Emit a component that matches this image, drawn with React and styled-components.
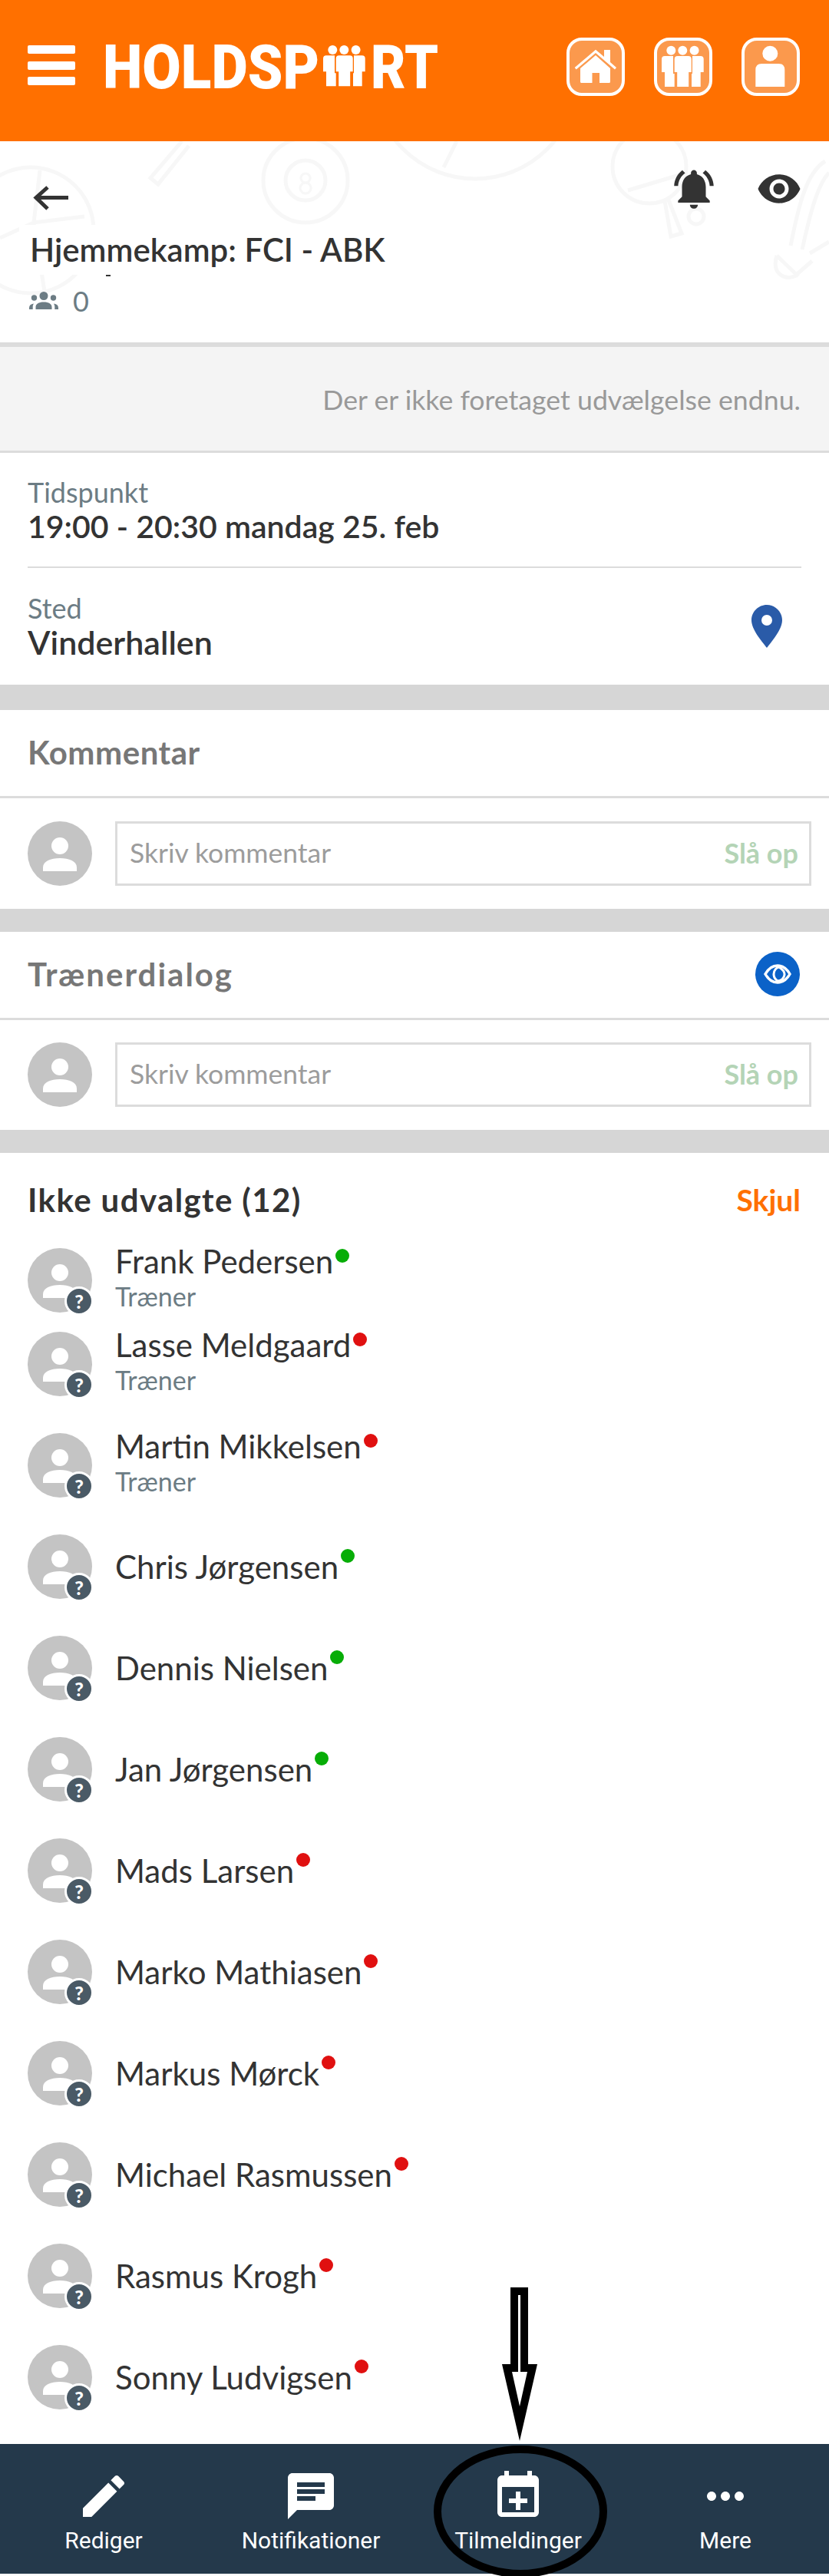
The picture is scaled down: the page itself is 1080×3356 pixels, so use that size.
import React from "react";
import styled, { createGlobalStyle } from "styled-components";

const Global = createGlobalStyle`
  html, body { margin: 0; padding: 0; background: #fff; }
  * { box-sizing: border-box; }
`;

const Page = styled.div`
  position: relative;
  width: 1080px;
  height: 3356px;
  overflow: hidden;
  background: #fff;
  font-family: "Lato", "Liberation Sans", sans-serif;
  color: #333;
`;

/* ---------- top header ---------- */
const Header = styled.header`
  height: 184px;
  background: #ff7000;
  display: flex;
  align-items: flex-start;
  padding: 49px 38px 0 36px;
`;
const Burger = styled.div`
  width: 62px;
  height: 52px;
  margin-top: 10px;
  display: flex;
  flex-direction: column;
  justify-content: space-between;
  span {
    display: block;
    height: 11px;
    background: #fff;
    border-radius: 2px;
  }
`;
const LogoSvg = styled.svg`
  display: block;
  margin: 0 0 0 40px;
  overflow: visible;
`;
const HeaderIcons = styled.nav`
  margin-left: auto;
  display: flex;
  gap: 38px;
`;
const HeaderButton = styled.div`
  width: 76px;
  height: 76px;
  border: 4px solid #fff;
  border-radius: 20px;
  background: #fb994d;
  position: relative;
  svg {
    display: block;
    position: absolute;
    left: -4px;
    top: -4px;
  }
`;

/* ---------- event summary ---------- */
const Summary = styled.section`
  position: relative;
  height: 262px;
  overflow: hidden;
  padding: 31px 35px 0 25px;
`;
const Doodle = styled.svg`
  position: absolute;
  left: 0;
  top: 0;
  pointer-events: none;
`;
const TopBar = styled.div`
  position: relative;
  height: 78px;
  display: flex;
  align-items: flex-start;
`;
const BackIcon = styled.svg`
  display: block;
  margin: 27px 0 0 18px;
`;
const TopActions = styled.div`
  margin-left: auto;
  display: flex;
  align-items: center;
  gap: 50px;
`;
const Title = styled.h1`
  position: relative;
  display: inline-block;
  margin: 0;
  padding: 0 15px 0 14px;
  height: 65px;
  line-height: 65px;
  font-size: 42px;
  font-weight: 600;
  background: #fff;
  white-space: nowrap;
`;
const ClippedDash = styled.div`
  position: relative;
  width: 6px;
  height: 2px;
  margin-left: 113px;
  background: #333;
`;
const CountRow = styled.div`
  position: relative;
  display: flex;
  align-items: center;
  gap: 19px;
  margin: 17px 0 0 13px;
  height: 30px;
  color: #6c7c84;
  font-size: 36px;
`;

/* ---------- selection note ---------- */
const Note = styled.div`
  height: 144px;
  border-top: 6px solid #dcdcdc;
  border-bottom: 3px solid #dcdcdc;
  background: #f4f4f4;
  display: flex;
  align-items: center;
  justify-content: flex-end;
  padding: 2px 37px 0 0;
  color: #999;
  font-size: 35.7px;
`;

/* ---------- info rows ---------- */
const Info = styled.div`
  padding: 0 36px;
`;
const InfoRow = styled.div`
  display: flex;
  align-items: center;
  justify-content: space-between;
  height: ${(p) => p.$h}px;
  padding-bottom: ${(p) => p.$pad || 0}px;
  border-bottom: ${(p) => (p.$line ? "2px solid #dcdcdc" : "none")};
`;
const Label = styled.div`
  color: #6c7c84;
  font-size: 36px;
  line-height: 44px;
`;
const Value = styled.div`
  color: #333;
  font-size: ${(p) => p.$size}px;
  font-weight: 600;
  line-height: 46px;
`;
const PinIcon = styled.svg`
  display: block;
  margin: 3px 25px 0 0;
`;
const Band = styled.div`
  height: ${(p) => p.$h || 30}px;
  background: #d6d6d6;
`;

/* ---------- comment blocks ---------- */
const SectionTitle = styled.div`
  height: 115px;
  border-bottom: 3px solid #dcdcdc;
  display: flex;
  align-items: center;
  justify-content: space-between;
  padding: 0 38px 3px 36px;
  color: #777;
  font-size: 42px;
  font-weight: 700;
  letter-spacing: ${(p) => p.$track || 0}px;
`;
const CommentRow = styled.div`
  display: flex;
  gap: 30px;
  padding: ${(p) => p.$top}px 23px 30px 36px;
`;
const AvatarBox = styled.div`
  position: relative;
  width: 84px;
  height: 84px;
  flex: none;
  svg { display: block; }
`;
const Input = styled.div`
  flex: 1;
  height: 84px;
  border: 3px solid #dcdcdc;
  display: flex;
  align-items: center;
  justify-content: space-between;
  padding: 0 14px 3px 16px;
`;
const Placeholder = styled.span`
  color: #9c9c9c;
  font-size: 35.5px;
`;
const Lookup = styled.span`
  color: #b4d4b6;
  font-size: 36px;
  font-weight: 700;
`;

/* ---------- list ---------- */
const ListHead = styled.div`
  height: 124px;
  display: flex;
  align-items: center;
  justify-content: space-between;
  padding: 0 37px 2px 36px;
`;
const ListTitle = styled.div`
  font-size: 42px;
  font-weight: 700;
  letter-spacing: 1.4px;
  color: #333;
`;
const Hide = styled.div`
  font-size: 39px;
  font-weight: 700;
  color: #ff7000;
`;
const Row = styled.div`
  display: flex;
  gap: 30px;
  padding-left: 36px;
  height: ${(p) => p.$h}px;
`;
const Badge = styled.span`
  position: absolute;
  right: -2px;
  bottom: -4px;
  width: 38px;
  height: 38px;
  border-radius: 50%;
  border: 3px solid #fff;
  background: #4a5a66;
  color: #fff;
  font-family: "Lato", sans-serif;
  font-weight: 900;
  font-size: 25px;
  line-height: 32px;
  text-align: center;
`;
const PersonText = styled.div`
  height: 84px;
  display: flex;
  flex-direction: column;
  justify-content: ${(p) => (p.$role ? "flex-start" : "center")};
  margin-top: ${(p) => (p.$role ? "-5px" : "0")};
`;
const NameLine = styled.div`
  display: flex;
  align-items: flex-start;
  gap: 3px;
`;
const Name = styled.span`
  font-size: 42px;
  line-height: 44px;
  color: #333;
`;
const Dot = styled.i`
  width: 18px;
  height: 18px;
  margin-top: ${(p) => (p.$role ? 6 : -1)}px;
  border-radius: 50%;
  background: ${(p) => (p.$on ? "#07ad07" : "#e01010")};
`;
const Role = styled.span`
  font-size: 34px;
  line-height: 44px;
  margin-top: 2px;
  color: #6c7c84;
`;

/* ---------- bottom bar ---------- */
const BottomBar = styled.footer`
  height: 169px;
  background: #24394b;
  display: grid;
  grid-template-columns: repeat(4, 1fr);
  padding-top: 32px;
`;
const BarItem = styled.div`
  display: flex;
  flex-direction: column;
  align-items: center;
  color: #fff;
  font-family: "Roboto", sans-serif;
  font-size: 30px;
  line-height: 44px;
  svg { display: block; }
`;

/* ---------- annotation drawn on the screenshot ---------- */
const Annotation = styled.svg`
  position: absolute;
  left: ${(p) => p.$x}px;
  top: ${(p) => p.$y}px;
  overflow: visible;
`;

const M = ({ d, size, fill = "#fff", children }) => (
  <svg width={size} height={size} viewBox="0 0 24 24" fill={fill}>
    <path d={d} />
    {children}
  </svg>
);

const Trio = ({ x = 0, y = 0, fill = "#fff" }) => (
  <g transform={`translate(${x} ${y})`} fill={fill}>
    <circle cx="22.3" cy="16.7" r="6" />
    <circle cx="37.3" cy="16.7" r="6" />
    <circle cx="52.6" cy="16.7" r="6" />
    <path d="M26.7 28q0-4 4-4h14q4 0 4 4v17h-3.5v19h-15V45h-3.5z" />
    <path d="M25 24h-11q-4 0-4 4v17h4v19h12.7V47h-1.7z" />
    <path d="M50 24h10.700q4 0 4 4v17h-4v19H49V47h1z" />
  </g>
);

const Avatar = ({ badge }) => (
  <AvatarBox>
    <svg width="84" height="84" viewBox="0 0 84 84">
      <circle cx="42" cy="42" r="42" fill="#c4c4c4" />
      <circle cx="42" cy="32" r="11" fill="#fff" />
      <path d="M20 65v-5c0-8 10-12 22-12s22 4 22 12v5z" fill="#fff" />
    </svg>
    {badge && <Badge>?</Badge>}
  </AvatarBox>
);

const people = [
  ["Frank Pedersen", 1, true, 109],
  ["Lasse Meldgaard", 0, true, 132],
  ["Martin Mikkelsen", 0, true, 132],
  ["Chris Jørgensen", 1, false, 132],
  ["Dennis Nielsen", 1, false, 132],
  ["Jan Jørgensen", 1, false, 132],
  ["Mads Larsen", 0, false, 132],
  ["Marko Mathiasen", 0, false, 132],
  ["Markus Mørck", 0, false, 132],
  ["Michael Rasmussen", 0, false, 132],
  ["Rasmus Krogh", 0, false, 132],
  ["Sonny Ludvigsen", 0, false, 129],
];

const Comment = ({ top }) => (
  <CommentRow $top={top}>
    <Avatar />
    <Input>
      <Placeholder>Skriv kommentar</Placeholder>
      <Lookup>Slå op</Lookup>
    </Input>
  </CommentRow>
);

export default function App() {
  return (
    <Page>
      <Global />
      <Header>
        <Burger><span /><span /><span /></Burger>
        <LogoSvg width="440" height="70" viewBox="0 0 440 70" aria-label="HOLDSPORT">
          <text x="-4" y="66" fontFamily="Roboto, sans-serif" fontWeight="900" fontSize="80" fill="#fff" textLength="282" lengthAdjust="spacingAndGlyphs">HOLDSP</text>
          <Trio x="273" y="-0.7" />
          <text x="345" y="66" fontFamily="Roboto, sans-serif" fontWeight="900" fontSize="80" fill="#fff" textLength="88" lengthAdjust="spacingAndGlyphs">RT</text>
        </LogoSvg>
        <HeaderIcons>
          <HeaderButton>
            <svg width="76" height="76" viewBox="0 0 76 76" fill="#fff">
              <path d="M38 23 18 40v17.500q0 1.500 1.500 1.500H33.500V46H43V59h12.500q1.500 0 1.500-1.500V40z" />
              <path d="M10.700 39 38 15.700 49 25v-9h8v16l8 7-2 2.500L38 20 12.700 41.500z" />
            </svg>
          </HeaderButton>
          <HeaderButton>
            <svg width="76" height="76" viewBox="0 0 76 76"><Trio /></svg>
          </HeaderButton>
          <HeaderButton>
            <svg width="76" height="76" viewBox="0 0 76 76" fill="#fff">
              <circle cx="37.300" cy="20.700" r="10" />
              <path d="M18.300 64V42q0-8 8-8h22q8 0 8 8v22z" />
            </svg>
          </HeaderButton>
        </HeaderIcons>
      </Header>

      <Summary>
        <Doodle width="1080" height="262" viewBox="0 184 1080 262" fill="none" stroke="#f7f7f7" strokeWidth="5">
          <circle cx="40" cy="300" r="82" />
          <path d="M52 222 44 290 110 282M44 290 0 310M44 290 58 380" />
          <path d="M237 184 196 232 206 240 246 190" />
          <circle cx="398" cy="235" r="55" />
          <circle cx="398" cy="235" r="26" />
          <path d="M398 226a6 6 0 1 0 .1 0M398 238a7 7 0 1 0 .1 0" strokeWidth="3" />
          <circle cx="619" cy="100" r="133" />
          <path d="M595 184 578 218" />
          <circle cx="846" cy="217" r="48" />
          <path d="M818 248 895 225M866 262 874 308 888 304 870 258" />
          <circle cx="907" cy="282" r="10" />
          <path d="M1030 320C1040 270 1050 225 1075 210M1045 325C1055 280 1065 240 1080 225M1055 330 1080 315M1012 333C1005 355 1020 365 1035 360L1058 340M1012 333 1040 360" />
        </Doodle>
        <TopBar>
          <BackIcon width="46" height="32" viewBox="0 0 46 32" fill="none" stroke="#333" strokeWidth="5">
            <path d="M46 15.500H5M19 2 4 15.500 19 30" />
          </BackIcon>
          <TopActions>
            <M size={62} fill="#333" d="M7.580 4.080 6.150 2.650C3.750 4.480 2.170 7.300 2.030 10.500h2c.15-2.650 1.510-4.970 3.550-6.420zm12.390 6.420h2c-.15-3.200-1.730-6.020-4.120-7.850l-1.420 1.430c2.020 1.450 3.390 3.770 3.540 6.420zM18 11c0-3.070-1.640-5.640-4.500-6.320V4c0-.83-.67-1.500-1.500-1.500s-1.500.67-1.500 1.500v.68C7.630 5.360 6 7.920 6 11v5l-2 2v1h16v-1l-2-2v-5zm-6 11c.14 0 .27-.01.4-.04.65-.14 1.180-.58 1.440-1.180.1-.24.15-.5.15-.78h-4c.01 1.100.9 2 2.010 2z" />
            <M size={60} fill="#333" d="M12 4.500C7 4.500 2.730 7.610 1 12c1.730 4.390 6 7.500 11 7.500s9.270-3.110 11-7.500c-1.730-4.390-6-7.500-11-7.500zM12 17c-2.760 0-5-2.240-5-5s2.240-5 5-5 5 2.240 5 5-2.240 5-5 5zm0-8c-1.660 0-3 1.340-3 3s1.340 3 3 3 3-1.340 3-3-1.340-3-3-3z" />
          </TopActions>
        </TopBar>
        <Title>Hjemmekamp: FCI - ABK</Title>
        <ClippedDash />
        <CountRow>
          <svg width="38" height="24" viewBox="0 0 38 24" fill="#6c7c84">
            <circle cx="19" cy="5.500" r="5.500" />
            <circle cx="6.500" cy="8" r="3.700" />
            <circle cx="31.500" cy="8" r="3.700" />
            <path d="M8.500 23v-3c0-4 4-6.500 10.500-6.500S29.500 16 29.500 20v3zM0 23v-2c0-3 2-5 6-5.500-1 1.500-1.300 3-1.300 4.500v3zM38 23v-2c0-3-2-5-6-5.500 1 1.500 1.300 3 1.300 4.500v3z" />
          </svg>
          0
        </CountRow>
      </Summary>

      <Note>Der er ikke foretaget udvælgelse endnu.</Note>

      <Info>
        <InfoRow $h={150} $line>
          <div>
            <Label>Tidspunkt</Label>
            <Value $size={41}>19:00 - 20:30 mandag 25. feb</Value>
          </div>
        </InfoRow>
        <InfoRow $h={152} $pad={3}>
          <div>
            <Label>Sted</Label>
            <Value $size={43}>Vinderhallen</Value>
          </div>
          <PinIcon width="40" height="56" viewBox="0 0 40 56">
            <path fillRule="evenodd" fill="#2a5ba8" d="M20 0C9 0 0 9 0 20c0 12 13 27 20 36 7-9 20-24 20-36C40 9 31 0 20 0zm0 13a7 7 0 1 1 0 14 7 7 0 0 1 0-14z" />
          </PinIcon>
        </InfoRow>
      </Info>
      <Band $h={33} />

      <SectionTitle $track={0.5}>Kommentar</SectionTitle>
      <Comment top={30} />
      <Band />
      <SectionTitle $track={2}>
        Trænerdialog
        <svg width="58" height="60" viewBox="0 0 58 60">
          <circle cx="29" cy="30" r="29" fill="#0b62c8" />
          <path d="M13 30c4-7 10-11 16-11s12 4 16 11c-4 7-10 11-16 11s-12-4-16-11z" fill="none" stroke="#fff" strokeWidth="3.500" />
          <path d="M24 30c0-5 4-9 7-9 3 2 7 6 7 9 0 5-4 9-9 9-3-2-5-5-5-9z" fill="none" stroke="#fff" strokeWidth="3" />
        </svg>
      </SectionTitle>
      <Comment top={29} />
      <Band />

      <ListHead>
        <ListTitle>Ikke udvalgte (12)</ListTitle>
        <Hide>Skjul</Hide>
      </ListHead>

      <div>
        {people.map(([name, on, role, h]) => (
          <Row key={name} $h={h}>
            <Avatar badge />
            <PersonText $role={role}>
              <NameLine>
                <Name>{name}</Name>
                <Dot $on={on} $role={role} />
              </NameLine>
              {role && <Role>Træner</Role>}
            </PersonText>
          </Row>
        ))}
      </div>

      <BottomBar>
        <BarItem>
          <M size={72} d="M3 17.250V21h3.750L17.810 9.940l-3.750-3.750L3 17.250zM20.710 7.040c.39-.39.39-1.020 0-1.410l-2.340-2.340c-.39-.39-1.020-.39-1.410 0l-1.830 1.830 3.750 3.750 1.830-1.830z" />
          Rediger
        </BarItem>
        <BarItem>
          <M size={72} d="M20 2H4c-1.100 0-1.990.9-1.990 2L2 22l4-4h14c1.100 0 2-.9 2-2V4c0-1.100-.9-2-2-2zM6 9h12v2H6V9zm8 5H6v-2h8v2zm4-6H6V6h12v2z" />
          Notifikationer
        </BarItem>
        <BarItem>
          <M size={72} d="M19 3h-1V1h-2v2H8V1H6v2H5c-1.110 0-1.990.9-1.990 2L3 19c0 1.100.89 2 2 2h14c1.100 0 2-.9 2-2V5c0-1.100-.9-2-2-2zm0 16H5V8h14v11z">
            <path d="M11 10v3H8v2h3v3h2v-3h3v-2h-3v-3z" />
          </M>
          Tilmeldinger
        </BarItem>
        <BarItem>
          <M size={72} d="M6 10c-1.100 0-2 .9-2 2s.9 2 2 2 2-.9 2-2-.9-2-2-2zm12 0c-1.100 0-2 .9-2 2s.9 2 2 2 2-.9 2-2-.9-2-2-2zm-6 0c-1.100 0-2 .9-2 2s.9 2 2 2 2-.9 2-2-.9-2-2-2z" />
          Mere
        </BarItem>
      </BottomBar>

      <Annotation $x={654} $y={2980} width="46" height="200" viewBox="0 0 46 200">
        <path d="M11 0h23v100h12L23 200 0 100h11z" fill="#000" />
        <path d="M21 10h3v100h-3z" fill="#fff" />
        <path d="M13 110h20L23 155z" fill="#fff" />
      </Annotation>
      <Annotation $x={565} $y={3186} width="226" height="170" viewBox="0 0 226 170">
        <ellipse cx="113" cy="86" rx="108" ry="81" fill="none" stroke="#000" strokeWidth="10" />
      </Annotation>
    </Page>
  );
}
